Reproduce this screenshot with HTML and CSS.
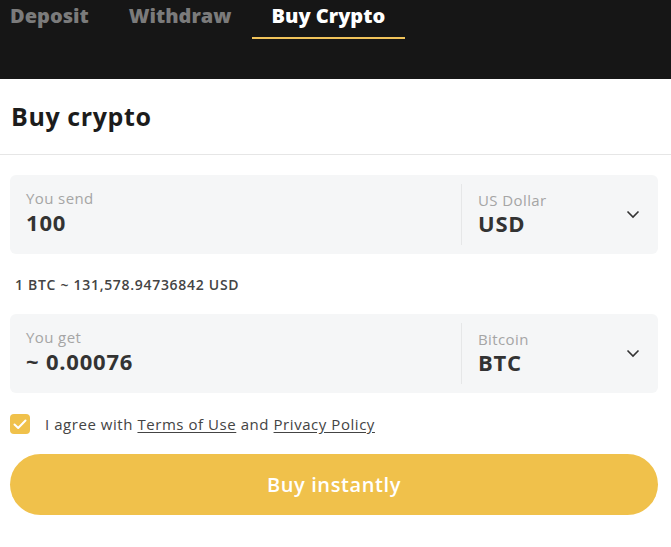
FILE: index.html
```html
<!DOCTYPE html>
<html>
<head>
<meta charset="utf-8">
<link rel="stylesheet" href="styles.css">
</head>
<body>
<header class="top">
  <nav class="tabs">
    <div class="tab">Deposit</div>
    <div class="tab">Withdraw</div>
    <div class="tab active">Buy Crypto</div>
  </nav>
</header>
<main class="panel">
  <h1 class="title">Buy crypto</h1>
  <div class="form">
    <div class="field">
      <div class="amount">
        <div class="label">You send</div>
        <div class="value">100</div>
      </div>
      <div class="currency">
        <div class="cur-text">
          <div class="label">US Dollar</div>
          <div class="value">USD</div>
        </div>
        <svg class="chev" width="14" height="9" viewBox="0 0 14 9"><path d="M1.5 1.5 L7 7 L12.5 1.5" fill="none" stroke="#333" stroke-width="1.6"/></svg>
      </div>
    </div>
    <div class="rate">1 BTC ~ 131,578.94736842 USD</div>
    <div class="field">
      <div class="amount">
        <div class="label">You get</div>
        <div class="value">~ 0.00076</div>
      </div>
      <div class="currency">
        <div class="cur-text">
          <div class="label">Bitcoin</div>
          <div class="value">BTC</div>
        </div>
        <svg class="chev" width="14" height="9" viewBox="0 0 14 9"><path d="M1.5 1.5 L7 7 L12.5 1.5" fill="none" stroke="#333" stroke-width="1.6"/></svg>
      </div>
    </div>
    <label class="agree">
      <span class="check"><svg width="14" height="11" viewBox="0 0 14 11"><path d="M1.5 5.5 L5.2 9 L12.5 1.5" fill="none" stroke="#fff" stroke-width="2" stroke-linecap="round" stroke-linejoin="round"/></svg></span>
      <span class="agree-text">I agree with <u>Terms of Use</u> and <u>Privacy Policy</u></span>
    </label>
    <button class="buy">Buy instantly</button>
  </div>
</main>
</body>
</html>
```

FILE: styles.css
```css
* { box-sizing: border-box; }
html, body { margin: 0; padding: 0; background: #fff; }
body { font-family: "Open Sans", "Noto Sans", sans-serif; color: #333; width: 671px; }
.top { background: #161616; height: 79px; padding-left: 10px; }
.tabs { display: flex; }
.tab {
  font-family: "Open Sans", sans-serif; font-weight: 800; font-size: 20px;
  color: #7b7b7b; padding: 0 20px; line-height: 32px; height: 39px;
}
.tab:first-child { padding-left: 0; }
.tab.active { color: #fff; border-bottom: 2px solid #f0c35a; }
.title { margin: 0; font-size: 25px; letter-spacing: 0.6px; font-weight: 700; color: #1c1c1c; padding: 22px 11px 0; height: 76px; line-height: 30px; border-bottom: 1px solid #e6e6e6; }
.form { padding: 20px 13px 0 10px; }
.field { display: flex; background: #f5f6f7; border-radius: 6px; height: 79px; padding: 9px 0; }
.amount { flex: 1; padding: 4px 16px 0; border-right: 1px solid #e6e7e8; }
.currency { width: 196px; display: flex; align-items: center; padding: 0 18px 0 16px; }
.cur-text { flex: 1; margin-top: -4px; }
.label { font-size: 15px; color: #a5a5a5; line-height: 20px; letter-spacing: 0.4px; }
.amount .value { margin-top: 1px; }
.value { font-size: 22px; font-weight: 700; color: #333; line-height: 26px; letter-spacing: 0.8px; }
.chev { display: block; }
.rate { font-size: 14px; font-weight: 600; color: #444; padding: 21px 5px 0; height: 60px; line-height: 20px; letter-spacing: 0.7px; }
.agree { display: flex; align-items: center; margin-top: 21px; gap: 15px; }
.check { width: 20px; height: 20px; border-radius: 4px; background: #f0c14b; display: flex; align-items: center; justify-content: center; }
.agree-text { font-size: 15px; color: #444; letter-spacing: 0.55px; }
.agree-text u { text-underline-offset: 2px; }
.buy { display: block; width: 648px; height: 61px; margin-top: 20px; border: 0; border-radius: 31px; background: #f0c14b; color: #fff; font-family: "Open Sans", sans-serif; font-size: 20px; font-weight: 600; letter-spacing: 0.6px; cursor: pointer; }
```
